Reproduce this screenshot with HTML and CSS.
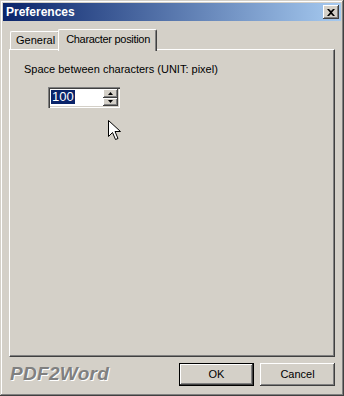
FILE: index.html
```html
<!DOCTYPE html>
<html lang="en">
<head>
    <meta charset="UTF-8">
    <title>Preferences</title>
    <link rel="stylesheet" href="styles.css">
</head>
<body>
    <div class="window">
        <div class="titlebar">
            <span class="title">Preferences</span>
            <button class="close" type="button">
                <svg width="8" height="7" viewBox="0 0 8 7"><path d="M0 0h2l2 2 2-2h2L5 3.5 8 7H6L4 5 2 7H0l3-3.5z" fill="#000"/></svg>
            </button>
        </div>

        <div class="content">
            <div class="tabs">
                <div class="tab">General</div>
                <div class="tab active">Character position</div>
            </div>
            <div class="panel">
                <div class="label">Space between characters (UNIT: pixel)</div>
                <div class="spin">
                    <div class="spin-field"><span class="sel">100</span></div>
                    <div class="spin-btns">
                        <div class="spin-btn"><svg width="5" height="3" viewBox="0 0 5 3"><path d="M2.5 0L5 3H0z" fill="#000"/></svg></div>
                        <div class="spin-btn"><svg width="5" height="3" viewBox="0 0 5 3"><path d="M0 0h5L2.5 3z" fill="#000"/></svg></div>
                    </div>
                </div>
                <!-- mouse pointer left in the capture -->
                <svg class="pointer" width="13" height="21" viewBox="0 0 13 21">
                    <path d="M0.5 0.5v16l4-4 3 7 2.5-1-3-7h5.5z" fill="#fff" stroke="#000" stroke-width="1"/>
                </svg>
            </div>

            <div class="footer">
                <div class="brand">PDF2Word</div>
                <div class="buttons">
                    <button type="button" class="btn default">OK</button>
                    <button type="button" class="btn">Cancel</button>
                </div>
            </div>
        </div>
    </div>
</body>
</html>
```

FILE: styles.css
```css
* {
    box-sizing: border-box;
}

body {
    margin: 0;
    background: #d4d0c8;
    font-family: "Liberation Sans", Arial, sans-serif;
    font-size: 11px;
    color: #000;
}

.window {
    width: 344px;
    height: 396px;
    background: #d4d0c8;
    padding: 3px 3px 3px 3px;
    display: flex;
    flex-direction: column;
    /* classic 3d frame */
    box-shadow: inset -1px -1px 0 #404040, inset 1px 1px 0 #d4d0c8, inset -2px -2px 0 #808080, inset 2px 2px 0 #fff;
}

.titlebar {
    height: 18px;
    background: linear-gradient(90deg, #0a246a, #a6caf0);
    display: flex;
    align-items: center;
    justify-content: space-between;
    padding: 0 2px 0 2px;
}

.title {
    color: #fff;
    font-weight: bold;
    font-size: 12px;
    padding-left: 1px;
}

.close {
    width: 16px;
    height: 14px;
    padding: 0;
    border: none;
    background: #d4d0c8;
    display: flex;
    align-items: center;
    justify-content: center;
    box-shadow: inset -1px -1px 0 #404040, inset 1px 1px 0 #fff, inset -2px -2px 0 #808080;
}

.content {
    flex: 1;
    display: flex;
    flex-direction: column;
    padding: 8px 6px 0 6px;
}

.tabs {
    display: flex;
    height: 20px;
    align-items: flex-end;
    padding-left: 1px;
    position: relative;
    z-index: 1;
}

.tab {
    height: 18px;
    padding: 0 4px 0 5px;
    line-height: 17px;
    border-top: 1px solid #fff;
    border-left: 1px solid #fff;
    border-right: 1px solid #404040;
    border-radius: 2px 2px 0 0;
    box-shadow: inset -1px 0 0 #808080;
}

.tab.active {
    height: 22px;
    margin: 0 -1px -2px -2px;
    padding: 0 6px 2px 7px;
    line-height: 18px;
    letter-spacing: -0.3px;
    background: #d4d0c8;
}

.panel {
    height: 308px;
    border-top: 1px solid #fff;
    border-left: 1px solid #fff;
    border-right: 1px solid #404040;
    border-bottom: 1px solid #404040;
    box-shadow: inset -1px -1px 0 #808080;
    padding: 13px 0 0 14px;
    position: relative;
}

.label {
    height: 13px;
    line-height: 13px;
}

.spin {
    margin: 11px 0 0 24px;
    width: 72px;
    height: 21px;
    display: flex;
    background: #fff;
    padding: 2px;
    box-shadow: inset 1px 1px 0 #808080, inset 2px 2px 0 #404040, inset -1px -1px 0 #fff, inset -2px -2px 0 #d4d0c8;
}

.spin-field {
    flex: 1;
    padding: 1px 0 0 1px;
}

.sel {
    display: inline-block;
    background: #0a246a;
    color: #fff;
    font-size: 13px;
    line-height: 14px;
    padding: 0 1px;
}

.spin-btns {
    width: 15px;
    display: flex;
    flex-direction: column;
}

.spin-btn {
    flex: 1;
    background: #d4d0c8;
    display: flex;
    align-items: center;
    justify-content: center;
    box-shadow: inset -1px -1px 0 #404040, inset 1px 1px 0 #fff, inset -2px -2px 0 #808080;
}

.pointer {
    position: absolute;
    left: 98px;
    top: 70px;
}

.footer {
    flex: 1;
    display: flex;
    align-items: center;
    justify-content: space-between;
    padding: 0 0 2px 1px;
}

.brand {
    font-family: "Liberation Sans", Arial, sans-serif;
    font-size: 19px;
    font-weight: bold;
    font-style: italic;
    color: #808080;
    text-shadow: 1px 1px 0 #fff;
    letter-spacing: 0.3px;
}

.buttons {
    display: flex;
    gap: 6px;
}

.btn {
    width: 75px;
    height: 23px;
    border: none;
    background: #d4d0c8;
    font-family: "Liberation Sans", Arial, sans-serif;
    font-size: 11px;
    color: #000;
    padding: 0;
    box-shadow: inset -1px -1px 0 #404040, inset 1px 1px 0 #fff, inset -2px -2px 0 #808080;
}

.btn.default {
    box-shadow: inset 0 0 0 1px #000, inset -2px -2px 0 #404040, inset 2px 2px 0 #fff, inset -3px -3px 0 #808080;
}
```
